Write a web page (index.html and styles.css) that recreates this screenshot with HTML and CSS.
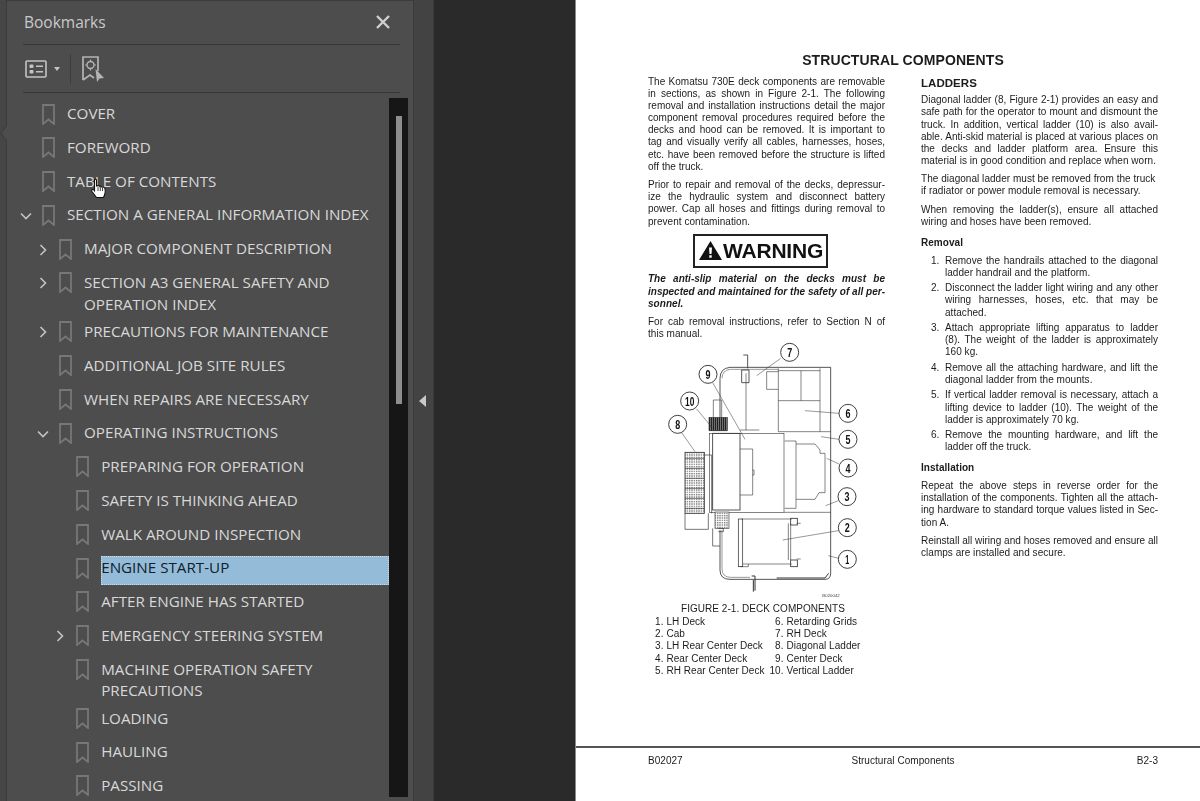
FILE: index.html
```html
<!DOCTYPE html>
<html lang="en">
<head>
<meta charset="utf-8">
<title>Bookmarks</title>
<link rel="stylesheet" href="styles.css">
</head>
<body>
<svg width="0" height="0" class="defs">
  <symbol id="bm" viewBox="0 0 13 21"><path d="M1 1H12V20L6.500 15.500L1 20Z" fill="none" stroke="#777" stroke-width="1.800"/></symbol>
  <symbol id="down" viewBox="0 0 14 14"><path d="M2 4.500L7 9.500L12 4.500" fill="none" stroke="#c4c4c4" stroke-width="1.600"/></symbol>
  <symbol id="right" viewBox="0 0 14 14"><path d="M4.500 2L9.500 7L4.500 12" fill="none" stroke="#c4c4c4" stroke-width="1.600"/></symbol>
</svg>
<div class="app">
  <div class="rail"><svg class="notch" width="8" height="16" viewBox="0 0 8 16"><path d="M8 0L2 8L8 16" fill="#4d4d4d" stroke="#3b3b3b"/></svg></div>
  <aside class="sidebar">
    <header class="side-head">
      <span class="side-title">Bookmarks</span>
      <svg class="close" width="16" height="16" viewBox="0 0 16 16"><path d="M2 2L14 14M14 2L2 14" stroke="#cfcfcf" stroke-width="2.400"/></svg>
    </header>
    <div class="side-tools">
      <svg width="22" height="18" viewBox="0 0 22 18"><rect x="1" y="1" width="20" height="16" rx="1" fill="none" stroke="#c4c4c4" stroke-width="1.600"/><rect x="4.500" y="4.500" width="4" height="3.500" rx="1" fill="#c4c4c4"/><rect x="4.500" y="10" width="4" height="3.500" rx="1" fill="#c4c4c4"/><path d="M11 6.200H18M11 11.700H18" stroke="#c4c4c4" stroke-width="1.500"/></svg>
      <svg class="caret" width="6" height="4" viewBox="0 0 6 4"><path d="M0 0H6L3 4Z" fill="#c4c4c4"/></svg>
      <span class="tool-sep"></span>
      <svg width="23" height="26" viewBox="0 0 23 26"><path d="M1 24V1H16V15M1 24L8 19L12 22" fill="none" stroke="#b4b4b4" stroke-width="1.700"/><circle cx="8.500" cy="9" r="3.500" fill="none" stroke="#b4b4b4" stroke-width="1.400"/><path d="M8.500 3.500V5M8.500 13V14.500M3 9H4.500M12.500 9H14" stroke="#b4b4b4" stroke-width="1.200"/><path d="M13.500 13L22 22L17.500 22.500L15 26Z" fill="#b4b4b4"/></svg>
    </div>
    <div class="side-body">
      <ul class="tree">
        <li class="row"><span class="chev"></span><svg class="bm"><use href="#bm"/></svg><span class="label">COVER</span></li>
        <li class="row"><span class="chev"></span><svg class="bm"><use href="#bm"/></svg><span class="label">FOREWORD</span></li>
        <li class="row"><span class="chev"></span><svg class="bm"><use href="#bm"/></svg><span class="label">TABLE OF CONTENTS</span></li>
        <li class="row"><span class="chev"><svg class="chev-i"><use href="#down"/></svg></span><svg class="bm"><use href="#bm"/></svg><span class="label">SECTION A GENERAL INFORMATION INDEX</span></li>
        <li class="row l1"><span class="chev"><svg class="chev-i"><use href="#right"/></svg></span><svg class="bm"><use href="#bm"/></svg><span class="label">MAJOR COMPONENT DESCRIPTION</span></li>
        <li class="row l1"><span class="chev"><svg class="chev-i"><use href="#right"/></svg></span><svg class="bm"><use href="#bm"/></svg><span class="label">SECTION A3 GENERAL SAFETY AND<br>OPERATION INDEX</span></li>
        <li class="row l1"><span class="chev"><svg class="chev-i"><use href="#right"/></svg></span><svg class="bm"><use href="#bm"/></svg><span class="label">PRECAUTIONS FOR MAINTENANCE</span></li>
        <li class="row l1"><span class="chev"></span><svg class="bm"><use href="#bm"/></svg><span class="label">ADDITIONAL JOB SITE RULES</span></li>
        <li class="row l1"><span class="chev"></span><svg class="bm"><use href="#bm"/></svg><span class="label">WHEN REPAIRS ARE NECESSARY</span></li>
        <li class="row l1"><span class="chev"><svg class="chev-i"><use href="#down"/></svg></span><svg class="bm"><use href="#bm"/></svg><span class="label">OPERATING INSTRUCTIONS</span></li>
        <li class="row l2"><span class="chev"></span><svg class="bm"><use href="#bm"/></svg><span class="label">PREPARING FOR OPERATION</span></li>
        <li class="row l2"><span class="chev"></span><svg class="bm"><use href="#bm"/></svg><span class="label">SAFETY IS THINKING AHEAD</span></li>
        <li class="row l2"><span class="chev"></span><svg class="bm"><use href="#bm"/></svg><span class="label">WALK AROUND INSPECTION</span></li>
        <li class="row l2"><span class="chev"></span><svg class="bm"><use href="#bm"/></svg><span class="label selected">ENGINE START-UP</span></li>
        <li class="row l2"><span class="chev"></span><svg class="bm"><use href="#bm"/></svg><span class="label">AFTER ENGINE HAS STARTED</span></li>
        <li class="row l2"><span class="chev"><svg class="chev-i"><use href="#right"/></svg></span><svg class="bm"><use href="#bm"/></svg><span class="label">EMERGENCY STEERING SYSTEM</span></li>
        <li class="row l2"><span class="chev"></span><svg class="bm"><use href="#bm"/></svg><span class="label">MACHINE OPERATION SAFETY<br>PRECAUTIONS</span></li>
        <li class="row l2"><span class="chev"></span><svg class="bm"><use href="#bm"/></svg><span class="label">LOADING</span></li>
        <li class="row l2"><span class="chev"></span><svg class="bm"><use href="#bm"/></svg><span class="label">HAULING</span></li>
        <li class="row l2"><span class="chev"></span><svg class="bm"><use href="#bm"/></svg><span class="label">PASSING</span></li>
      </ul>
      <div class="scrollbar"><div class="thumb"></div></div>
    </div>
    <svg class="hand" width="17" height="21" viewBox="0 0 17 21"><path d="M4.500 1.500C5.500 .8 6.500 1.300 6.500 2.500V8L8 7.500C9 7.300 9.500 7.800 9.800 8.500C10.800 7.900 11.600 8.300 12 9.200C13 8.800 14.500 9.200 15 10.500C15.500 13 15.500 15 14.500 17L13.500 19.500H6.500L2 13.500C1 12 2.500 10.800 4 12L4.500 12.700Z" fill="#fff" stroke="#111" stroke-width="1.100"/><path d="M8 8.500V13M10.300 9V13M12.500 10V13" stroke="#111" stroke-width=".8"/></svg>
  </aside>
  <div class="toggle"><svg width="7" height="12" viewBox="0 0 7 12"><path d="M7 0V12L0 6Z" fill="#c8c8c8"/></svg></div>
  <main class="viewer">
    <article class="page">
      <div class="page-main">
        <h1 class="page-title">STRUCTURAL COMPONENTS</h1>
        <div class="cols">
          <section class="col">
            <p class="para"><span class="jl">The Komatsu 730E deck components are removable</span><span class="jl">in sections, as shown in Figure 2-1. The following</span><span class="jl">removal and installation instructions detail the major</span><span class="jl">component removal procedures required before the</span><span class="jl">decks and hood can be removed. It is important to</span><span class="jl">tag and visually verify all cables, harnesses, hoses,</span><span class="jl">etc. have been removed before the structure is lifted</span>off the truck.</p>
            <p class="para"><span class="jl">Prior to repair and removal of the decks, depressur-</span><span class="jl">ize the hydraulic system and disconnect battery</span><span class="jl">power. Cap all hoses and fittings during removal to</span>prevent contamination.</p>
            <div class="warning">
              <svg width="23" height="19" viewBox="0 0 23 19"><path fill-rule="evenodd" d="M11.500 0L23 19H0ZM10 6.500L10.500 13H12.500L13 6.500ZM10.300 14.200V16.800H12.700V14.200Z" fill="#111"/></svg>
              <span>WARNING</span>
            </div>
            <p class="para caution"><span class="jl">The anti-slip material on the decks must be</span><span class="jl">inspected and maintained for the safety of all per-</span>sonnel.</p>
            <p class="para"><span class="jl">For cab removal instructions, refer to Section N of</span>this manual.</p>
            <svg class="figure" width="240" height="263" viewBox="0 0 720 789">
              <defs>
                <pattern id="hatch" width="7" height="7" patternUnits="userSpaceOnUse"><rect width="7" height="7" fill="#fff"/><rect width="4" height="4" fill="#777"/></pattern>
                <pattern id="dark" width="6" height="6" patternUnits="userSpaceOnUse"><rect width="6" height="6" fill="#222"/><rect width="2" height="6" fill="#999"/></pattern>
              </defs>
              <g fill="none" stroke="#333" stroke-width="1.800">
                <path d="M240 570V690Q240 718 270 718H555Q572 718 572 700V82H270Q240 85 240 115V240" stroke-width="2.500"/>
                <path d="M246 570V686Q246 712 272 712H330M246 115Q246 90 272 88H415" stroke-width="1.500"/>
                <path d="M415 85V275M540 85V275M415 182H540M483 92V182M380 95H415M380 95V148H415M415 92H540"/>
                <path d="M318 100V270M300 270H358M415 275H572M432 517H572"/>
                <rect x="208" y="280" width="224" height="237"/>
                <rect x="218" y="280" width="82" height="230" stroke-width="2.500"/>
                <path d="M300 327H338V465H300M338 390H342V405H338"/>
                <path d="M434 303H468V505H434M468 312H525L540 330V340H555V458H537L525 478H468"/>
                <rect x="135" y="337" width="58" height="183" fill="url(#hatch)" stroke-width="2.500"/>
                <path d="M135 520V568H205V520M193 345H215V520M135 355H193M135 385H193M135 415H193M135 445H193M135 475H193M135 505H193" stroke-width="2"/>
                <rect x="207" y="232" width="55" height="40" fill="url(#dark)"/>
                <path d="M220 180H245V232M220 180V232M207 272H262"/>
                <rect x="225" y="516" width="42" height="50" fill="url(#hatch)"/>
                <path d="M218 565V618H240M235 565H250V575H235" stroke-width="2"/>
                <rect x="295" y="537" width="13" height="143" stroke-width="2.200"/>
                <path d="M305 537H455M308 672H455M300 680H325V672M445 550V660M452 550V660M470 550H482M470 657H482"/>
                <rect x="452" y="535" width="20" height="20" stroke-width="2.500"/>
                <rect x="452" y="660" width="20" height="20" stroke-width="2.500"/>
                <path d="M305 128V90H327V128M310 45H323V85M305 128H327" stroke-width="2.500"/>
                <path d="M335 708H345V752M340 720V755" stroke-width="3"/>
                <path d="M410 714H555L566 700" stroke-width="3"/>
              </g>
              <g stroke="#333" stroke-width="1.500">
                <path d="M422 55L350 107M218 128L315 298M170 207L218 265M125 278L165 335M597 220L495 212M597 298L543 290M597 372L560 355M595 482L557 497M595 572L428 600M596 655L565 647"/>
              </g>
              <g class="callouts">
                <circle cx="449" cy="37" r="27"/><text x="449" y="51" textLength="15" lengthAdjust="spacingAndGlyphs">7</text>
                <circle cx="204" cy="103" r="27"/><text x="204" y="117" textLength="15" lengthAdjust="spacingAndGlyphs">9</text>
                <circle cx="149" cy="183" r="27"/><text x="149" y="197" textLength="28" lengthAdjust="spacingAndGlyphs">10</text>
                <circle cx="113" cy="253" r="27"/><text x="113" y="267" textLength="15" lengthAdjust="spacingAndGlyphs">8</text>
                <circle cx="624" cy="220" r="27"/><text x="624" y="234" textLength="15" lengthAdjust="spacingAndGlyphs">6</text>
                <circle cx="624" cy="298" r="27"/><text x="624" y="312" textLength="15" lengthAdjust="spacingAndGlyphs">5</text>
                <circle cx="624" cy="384" r="27"/><text x="624" y="398" textLength="15" lengthAdjust="spacingAndGlyphs">4</text>
                <circle cx="621" cy="470" r="27"/><text x="621" y="484" textLength="15" lengthAdjust="spacingAndGlyphs">3</text>
                <circle cx="622" cy="563" r="27"/><text x="622" y="577" textLength="15" lengthAdjust="spacingAndGlyphs">2</text>
                <circle cx="622" cy="658" r="27"/><text x="622" y="672" textLength="12" lengthAdjust="spacingAndGlyphs">1</text>
              </g>
              <text x="547" y="772" class="figcode">B020042</text>
            </svg>
            <div class="caption">FIGURE 2-1. DECK COMPONENTS</div>
            <div class="legend">
              <span class="n">1.</span><span>LH Deck</span><span class="n">6.</span><span>Retarding Grids</span>
              <span class="n">2.</span><span>Cab</span><span class="n">7.</span><span>RH Deck</span>
              <span class="n">3.</span><span>LH Rear Center Deck</span><span class="n">8.</span><span>Diagonal Ladder</span>
              <span class="n">4.</span><span>Rear Center Deck</span><span class="n">9.</span><span>Center Deck</span>
              <span class="n">5.</span><span>RH Rear Center Deck</span><span class="n">10.</span><span>Vertical Ladder</span>
            </div>
          </section>
          <section class="col">
            <h2 class="h-major">LADDERS</h2>
            <p class="para"><span class="jl">Diagonal ladder (8, Figure 2-1) provides an easy and</span><span class="jl">safe path for the operator to mount and dismount the</span><span class="jl">truck. In addition, vertical ladder (10) is also avail-</span><span class="jl">able. Anti-skid material is placed at various places on</span><span class="jl">the decks and ladder platform area. Ensure this</span>material is in good condition and replace when worn.</p>
            <p class="para">The diagonal ladder must be removed from the truck<br>if radiator or power module removal is necessary.</p>
            <p class="para"><span class="jl">When removing the ladder(s), ensure all attached</span>wiring and hoses have been removed.</p>
            <h3 class="h-minor">Removal</h3>
            <ol class="steps">
              <li class="step"><span class="sn">1.</span><span><span class="jl">Remove the handrails attached to the diagonal</span>ladder handrail and the platform.</span></li>
              <li class="step"><span class="sn">2.</span><span><span class="jl">Disconnect the ladder light wiring and any other</span><span class="jl">wiring harnesses, hoses, etc. that may be</span>attached.</span></li>
              <li class="step"><span class="sn">3.</span><span><span class="jl">Attach appropriate lifting apparatus to ladder</span><span class="jl">(8). The weight of the ladder is approximately</span>160 kg.</span></li>
              <li class="step"><span class="sn">4.</span><span><span class="jl">Remove all the attaching hardware, and lift the</span>diagonal ladder from the mounts.</span></li>
              <li class="step"><span class="sn">5.</span><span><span class="jl">If vertical ladder removal is necessary, attach a</span><span class="jl">lifting device to ladder (10). The weight of the</span>ladder is approximately 70 kg.</span></li>
              <li class="step"><span class="sn">6.</span><span><span class="jl">Remove the mounting hardware, and lift the</span>ladder off the truck.</span></li>
            </ol>
            <h3 class="h-minor">Installation</h3>
            <p class="para"><span class="jl">Repeat the above steps in reverse order for the</span><span class="jl">installation of the components. Tighten all the attach-</span><span class="jl">ing hardware to standard torque values listed in Sec-</span>tion A.</p>
            <p class="para"><span class="jl">Reinstall all wiring and hoses removed and ensure all</span>clamps are installed and secure.</p>
          </section>
        </div>
      </div>
      <footer class="page-foot">
        <span>B02027</span><span>Structural Components</span><span class="foot-r">B2-3</span>
      </footer>
    </article>
  </main>
</div>
</body>
</html>
```
FILE: styles.css
```css
* { box-sizing: border-box; }
html, body { margin: 0; height: 100%; overflow: hidden; }
body { background: #2a2a2a; font-family: "Open Sans", "Liberation Sans", sans-serif; }
.defs { position: absolute; }
.app { display: flex; height: 801px; }

.rail { position: relative; width: 7px; background: #464646; border-right: 1px solid #3b3b3b; flex: none; }
.notch { position: absolute; left: -1px; top: 125px; }

.sidebar { position: relative; width: 406px; flex: none; background: #4d4d4d; display: flex; flex-direction: column; border-top: 1px solid #3c3c3c; }
.side-head { height: 44px; margin: 0 13px 0 16px; padding: 0 9px 2px 1px; border-bottom: 1px solid #373737; display: flex; align-items: center; justify-content: space-between; }
.side-title { font-size: 15.5px; color: #c9c9c9; }
.side-tools { height: 48px; margin: 0 13px 0 16px; padding: 0 0 0 2px; border-bottom: 1px solid #373737; display: flex; align-items: center; }
.caret { margin-left: 7px; }
.tool-sep { width: 1px; height: 30px; background: #3d3d3d; margin: 0 11px 0 10px; }

.side-body { flex: 1; min-height: 0; display: flex; padding: 4.500px 5px 4px 0; }
.tree { flex: 1; min-width: 0; margin: 0; padding: 0 0 0 10px; list-style: none; overflow: hidden; }
.row { display: flex; align-items: flex-start; min-height: 33.75px; padding-top: 4px; }
.row.l1 { padding-left: 17px; }
.row.l2 { padding-left: 34.2px; }
.chev { width: 25px; flex: none; height: 26px; padding: 6px 0 0 2px; }
.chev-i { display: block; width: 14px; height: 14px; }
.bm { width: 13px; height: 21px; flex: none; margin-top: 2px; }
.label { flex: 1; margin-left: 12px; min-height: 29.6px; padding-top: 1.700px; font-size: 15.2px; line-height: 21.7px; color: #d8d8d8; white-space: nowrap; }
.selected { background: #94bcd9; color: #10202c; outline: 1px dotted #cfd8de; outline-offset: -1px; }
.scrollbar { width: 19px; flex: none; margin-top: .5px; background: #161616; padding: 18px 6px 0 7px; }
.thumb { height: 288px; background: #8e8e8e; }
.hand { position: absolute; left: 83px; top: 177px; }

.toggle { width: 21px; flex: none; background: #434343; border-left: 1px solid #3b3b3b; border-right: 1px solid #3b3b3b; display: flex; align-items: center; justify-content: center; padding-right: 2px; }
.viewer { flex: 1; min-width: 0; background: #2a2a2a; padding-left: 141px; }

.page { height: 801px; background: #fff; border-left: 1px solid #8a8a8a; display: flex; flex-direction: column; color: #1c1c1c; font-family: "Liberation Sans", Arial, sans-serif; font-size: 10px; letter-spacing: .04px; line-height: 12.15px; }
.page-main { flex: 1; min-height: 0; padding: 52px 42px 0 72px; filter: blur(0.25px); }
.page-title { margin: 0 0 7.7px; font-size: 14px; line-height: 16px; font-weight: 700; text-align: center; letter-spacing: 0.1px; }
.cols { display: flex; gap: 36px; }
.col { width: 237px; flex: none; }
.para { margin: 0 0 6.1px; }
.jl { display: block; text-align: justify; text-align-last: justify; letter-spacing: 0; }
.warning { width: 135px; height: 34px; margin: 6.3px 0 5.5px 45px; border: 2px solid #222; display: flex; align-items: center; padding-left: 4px; gap: 1px; font-size: 21px; font-weight: 700; color: #111; letter-spacing: -0.2px; }
.caution { font-weight: 700; font-style: italic; margin-bottom: 5.6px; }
.figure { display: block; margin: -6px 0 0 -8px; }
.callouts circle { fill: #fff; stroke: #222; stroke-width: 2.6; }
.callouts text { font: 700 40px "Liberation Sans", Arial, sans-serif; text-anchor: middle; fill: #111; }
.figcode { font: 13px "Liberation Sans", Arial, sans-serif; fill: #444; }
.caption { margin: 0 0 1px 33px; }
.legend { display: grid; grid-template-columns: 15.5px 100px 14px auto; column-gap: 3px; white-space: nowrap; }
.n { text-align: right; }
.h-major { margin: 0 0 4.5px; font-size: 11.5px; line-height: 14px; font-weight: 700; }
.h-minor { margin: 9px 0 5.5px; font-size: 10px; line-height: 12.15px; font-weight: 700; }
.steps { margin: 0 0 1.5px; padding: 0 0 0 10px; list-style: none; }
.step { display: flex; margin-bottom: 3.3px; }
.sn { width: 14px; flex: none; }
.step > span:last-child { flex: 1; min-width: 0; }
.page-foot { flex: none; height: 55px; border-top: 2px solid #555; padding: 7px 42px 0 72px; display: grid; grid-template-columns: 1fr auto 1fr; filter: blur(0.25px); }
.foot-r { text-align: right; }
```
